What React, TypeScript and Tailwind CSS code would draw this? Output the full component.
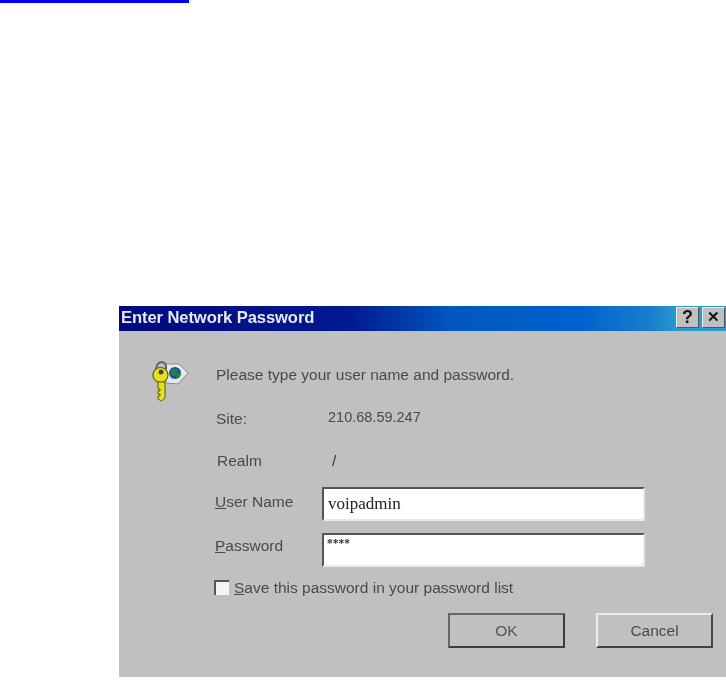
export default function App() {
  return (
    <main className="h-[680px] w-[726px] overflow-hidden bg-white font-['Liberation_Sans',Arial,sans-serif]">
      <div className="h-[3px] w-[189px] bg-[#0000ff]" />
      <div className="ml-[119px] mt-[303px] h-[371px] w-[607px] bg-[#c0c0c0]">
        <TitleBar />
        <div className="flex">
          <KeyIcon />
          <div className="ml-[25px] w-[500px] text-[15.5px] leading-[16px] text-[#4a4a4a] blur-[0.4px]">
            <p className="ml-[1px] mt-[36px]">Please type your user name and password.</p>
            <div className="mt-[26px] flex">
              <span className="ml-[1px] mt-[2px] w-[112px]">Site:</span>
              <span className="text-[14.5px]">210.68.59.247</span>
            </div>
            <div className="mt-[26px] flex">
              <span className="ml-[2px] w-[115px]">Realm</span>
              <span className="text-[#333]">/</span>
            </div>
            <Field
              label="User Name"
              first="U"
              className="mt-[18px]"
              labelClass="mt-[-4px]"
              valueClass="items-center pl-[4px] text-[17px] text-[#222]"
              value="voipadmin"
            />
            <Field
              label="Password"
              first="P"
              className="mt-[12px]"
              labelClass="mt-[-8px]"
              valueClass="items-start pl-[3px] text-[11.5px] font-bold text-[#333]"
              value="****"
            />
            <div className="mt-[13px] flex items-center">
              <span className="ml-[-1px] mt-[-1px] block h-[15px] w-[15px] border-l-2 border-t-2 border-l-[#555] border-t-[#555] bg-[#f4f4f4]" />
              <span className="ml-[5px]">
                <u>S</u>ave this password in your password list
              </span>
            </div>
            <div className="mt-[17px] flex">
              <button className="ml-[233px] h-[35px] w-[117px] rounded-[1px] border-2 border-[#3c3c3c] border-l-[#666] border-t-[#666] bg-[#c0c0c0] text-[15.5px] text-[#555]">
                OK
              </button>
              <button className="ml-[31px] h-[35px] w-[117px] border-2 border-b-[#444] border-l-[#ececec] border-r-[#444] border-t-[#ececec] bg-[#c0c0c0] text-[15.5px] text-[#4a4a4a]">
                Cancel
              </button>
            </div>
          </div>
        </div>
      </div>
    </main>
  );
}

function TitleBar() {
  return (
    <div className="flex h-[25px] items-center bg-[linear-gradient(90deg,#000a7d_0%,#001a90_38%,#0058c0_55%,#0062cc_76%,#1a80cc_88%,#2a9ad0_92%)] pl-[2px]">
      <span className="flex-1 text-[16.6px] font-bold tracking-[-0.1px] text-[#e8e8f4] blur-[0.4px]">
        Enter Network Password
      </span>
      <div className="mb-[2px] flex gap-[3px] pr-[1px]">
        <CaptionButton label="?" />
        <CaptionButton label="✕" small />
      </div>
    </div>
  );
}

function CaptionButton({ label, small }: { label: string; small?: boolean }) {
  return (
    <span
      className={`flex h-[21px] w-[23px] items-center justify-center border border-b-[#555] border-l-[#eee] border-r-[#555] border-t-[#eee] bg-[#c0c0c0] font-bold text-[#111] blur-[0.3px] ${
        small ? "text-[15px]" : "text-[18px]"
      }`}
    >
      {label}
    </span>
  );
}

function Field({
  label,
  first,
  value,
  className,
  labelClass,
  valueClass,
}: {
  label: string;
  first: string;
  value: string;
  className: string;
  labelClass: string;
  valueClass: string;
}) {
  return (
    <div className={`flex items-center ${className}`}>
      <span className={`w-[107px] ${labelClass}`}>
        <u>{first}</u>
        {label.slice(1)}
      </span>
      <div
        className={`flex h-[34px] w-[323px] border-2 border-b-[#e8e8e8] border-l-[#555] border-r-[#e8e8e8] border-t-[#555] bg-white font-['Liberation_Serif',serif] ${valueClass}`}
      >
        {value}
      </div>
    </div>
  );
}

function KeyIcon() {
  return (
    <svg width="38" height="42" viewBox="0 0 38 42" className="ml-[33px] mt-[30px] shrink-0 blur-[0.5px]">
      <path d="M14 3 L27 3 L36 12 L26 23 L14 22 Z" fill="#e8e8e8" stroke="#8a8a8a" strokeWidth="1" />
      <circle cx="23" cy="12" r="6" fill="#1a4fb0" />
      <path d="M18 10 Q22 6 26 9 Q25 15 20 15 Z" fill="#1e8a2e" />
      <path d="M24 13 L29 11 L28 16 L25 17 Z" fill="#1e8a2e" />
      <path d="M4 8 Q5 1 10 1 Q15 2 14 8" fill="none" stroke="#666" strokeWidth="2" />
      <circle cx="8.500" cy="14" r="7.500" fill="#e6e020" stroke="#5c5a10" strokeWidth="1.200" />
      <circle cx="9" cy="11" r="2.500" fill="#444" />
      <path d="M6 21 H13 V37 L9.500 40 L6 38 V35 H8 V33 H6 V30 H8 V28 H6 Z" fill="#e6e020" stroke="#5c5a10" strokeWidth="1" />
    </svg>
  );
}
